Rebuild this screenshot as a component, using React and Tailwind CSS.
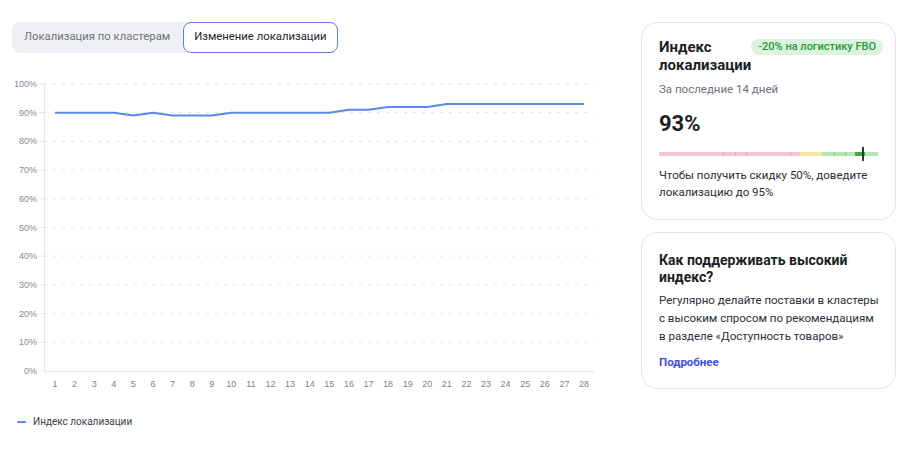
import React from "react";

const values = [90, 90, 90, 90, 89, 90, 89, 89, 89, 90, 90, 90, 90, 90, 90, 91, 91, 92, 92, 92, 93, 93, 93, 93, 93, 93, 93, 93];

const xAt = (i) => 55 + i * (529 / 27);
const yAt = (v) => 301 - v * 2.87;

const gridColor = (p) => {
  if (p >= 80) return "#d3ebd3";
  if (p === 70) return "#f1ecbc";
  return "#e6e7ea";
};

function Chart() {
  const points = values.map((v, i) => `${xAt(i).toFixed(1)},${yAt(v).toFixed(1)}`).join(" ");
  const ticks = [100, 90, 80, 70, 60, 50, 40, 30, 20, 10];

  return (
    <svg width="600" height="330" className="block mt-[17px]" style={{ fontFamily: "'Liberation Sans', Arial, sans-serif" }}>
      {ticks.map((p) => (
        <g key={p}>
          <line x1="39" x2="44" y1={yAt(p)} y2={yAt(p)} stroke={gridColor(p)} strokeWidth="1" />
          <line x1="44" x2="594" y1={yAt(p)} y2={yAt(p)} stroke={gridColor(p)} strokeWidth="1" strokeDasharray="3 6" />
          <text x="37" y={yAt(p) + 3} textAnchor="end" fontSize="9" fill="#858a93">
            {p}%
          </text>
        </g>
      ))}
      <text x="37" y={yAt(0) + 3} textAnchor="end" fontSize="9" fill="#858a93">
        0%
      </text>
      <line x1="44.5" x2="44.5" y1={yAt(100)} y2={yAt(0)} stroke="#e3e5e8" strokeWidth="1" />
      <line x1="44" x2="594" y1={yAt(0) + 0.5} y2={yAt(0) + 0.5} stroke="#e3e5e8" strokeWidth="1" />
      {values.map((_, i) => (
        <text key={i} x={xAt(i)} y="317" textAnchor="middle" fontSize="9" fill="#7d828b">
          {i + 1}
        </text>
      ))}
      <polyline points={points} fill="none" stroke="#5b87e6" strokeWidth="2" strokeLinejoin="round" />
    </svg>
  );
}

function Bar() {
  return (
    <div className="relative mt-[15px] h-[4px] w-[219px]">
      <div className="flex h-full w-full">
        <div className="h-full w-[141px] bg-[#f4c6d4]" />
        <div className="h-full w-[22px] bg-[#f1ea9c]" />
        <div className="h-full w-[33px] bg-[#b7e6b5]" />
        <div className="h-full w-[10px] bg-[#3cb043]" />
        <div className="h-full w-[13px] bg-[#b7e6b5]" />
      </div>
      <div className="absolute left-[64px] top-0 h-full w-px bg-[#e3a3b8]" />
      <div className="absolute left-[76px] top-0 h-full w-px bg-[#e3a3b8]" />
      <div className="absolute left-[87px] top-0 h-full w-px bg-[#e3a3b8]" />
      <div className="absolute left-[131px] top-0 h-full w-px bg-[#e3a3b8]" />
      <div className="absolute left-[175px] top-0 h-full w-px bg-[#8fd08c]" />
      <div className="absolute left-[186px] top-0 h-full w-px bg-[#8fd08c]" />
      <div className="absolute left-[203px] top-[-5px] h-[14px] w-[2px] bg-[#2d3a2f]" />
    </div>
  );
}

export default function App() {
  return (
    <div className="flex h-[452px] w-[914px] bg-white text-[#1f2329]" style={{ fontFamily: "Roboto, 'Noto Sans', sans-serif" }}>
      <div className="w-[641px] shrink-0">
        <div className="pl-3 pt-[22px]">
          <div className="inline-flex h-[31px] items-center rounded-lg bg-[#eff0f3]">
            <div className="pl-3 pr-[13px] text-[11.3px] text-[#6e737c]">Локализация по кластерам</div>
            <div className="flex h-full items-center rounded-lg border border-[#5b7cf0] bg-white px-[10px] text-[11.3px] text-[#1f2329]">
              Изменение локализации
            </div>
          </div>
        </div>
        <Chart />
        <div className="mt-[14px] flex items-center pl-[17px]">
          <div className="h-[2px] w-[9px] rounded bg-[#5b87e6]" />
          <span className="ml-[7px] text-[10px] text-[#3a3f47]">Индекс локализации</span>
        </div>
      </div>

      <div className="flex w-[255px] shrink-0 flex-col gap-[12px] pt-[22px]">
        <div className="rounded-2xl border border-[#e3e5e9] px-[17px] pb-[18px] pt-[15px]">
          <div className="flex items-start justify-between">
            <div className="text-[15px] font-bold leading-[18px] text-[#1b1f24]">
              Индекс
              <br />
              локализации
            </div>
            <div className="mt-[1px] whitespace-nowrap rounded-full bg-[#dcf4dd] px-[7px] py-px text-[11px] font-medium leading-[14px] text-[#229a3a]">
              -20% на логистику FBO
            </div>
          </div>
          <div className="mt-[7px] text-[11.5px] leading-[16px] text-[#6b7079]">За последние 14 дней</div>
          <div className="mt-[14px] text-[22px] font-bold leading-[26px] text-[#1b1f24]">93%</div>
          <Bar />
          <div className="mt-[11px] whitespace-nowrap text-[11.5px] leading-[17px] text-[#2a2e35]">
            Чтобы получить скидку 50%, доведите
            <br />
            локализацию до 95%
          </div>
        </div>

        <div className="rounded-2xl border border-[#e3e5e9] px-[17px] pb-[18px] pt-[19px]">
          <div className="text-[14px] font-bold leading-[17px] text-[#1b1f24]">
            Как поддерживать высокий
            <br />
            индекс?
          </div>
          <div className="mt-[5px] whitespace-nowrap text-[11.5px] leading-[18px] text-[#2a2e35]">
            Регулярно делайте поставки в кластеры
            <br />с высоким спросом по рекомендациям
            <br />в разделе «Доступность товаров»
          </div>
          <div className="mt-[9px] text-[11.5px] font-bold leading-[16px] text-[#3f4fe6]">Подробнее</div>
        </div>
      </div>
    </div>
  );
}
